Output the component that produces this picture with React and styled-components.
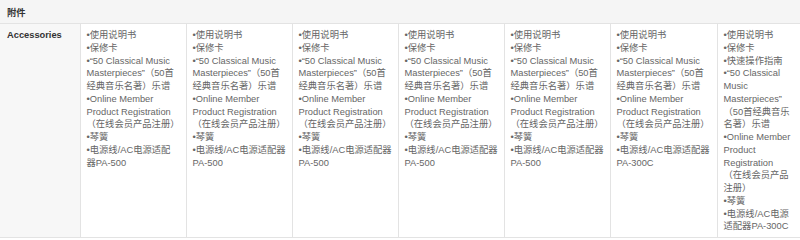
import React from 'react';
import styled, { createGlobalStyle } from 'styled-components';

const GlobalStyle = createGlobalStyle`
    body {
        margin: 0;
        background: #ffffff;
        font-family: "Liberation Sans", Arial, "Noto Sans CJK SC", sans-serif;
    }
`;

const Table = styled.table`
    width: 800px;
    border-collapse: collapse;
    table-layout: fixed;
    font-size: 9.3px;
    color: #666666;
`;

const HeadCell = styled.th`
    height: 23px;
    padding: 0 7px;
    background: #f5f5f5;
    border-bottom: 1px solid #e3e3e3;
    text-align: left;
    font-weight: bold;
    color: #333333;
`;

const LabelCell = styled.td`
    vertical-align: top;
    padding: 5px 7px 4px;
    background: #f7f7f7;
    border-right: 1px solid #e3e3e3;
    border-bottom: 1px solid #e3e3e3;
    font-weight: bold;
    color: #333333;
    line-height: 12.75px;
`;

const ItemCell = styled.td`
    vertical-align: top;
    padding: 5px ${(p) => p.$padRight}px 4px 6px;
    background: #ffffff;
    border-right: 1px solid ${(p) => (p.$last ? 'transparent' : '#e3e3e3')};
    border-bottom: 1px solid #e3e3e3;
    line-height: 12.75px;
`;

const Item = styled.div``;

// \u200B lets the line break between the closing quote and the bracket
const base = [
    '使用说明书',
    '保修卡',
    '“50 Classical Music Masterpieces”\u200B（50首经典音乐名著）乐谱',
    'Online Member Product Registration （在线会员产品注册）',
    '琴簧',
];

const models = [
    { items: [...base, '电源线/AC电源适配器PA-500'], width: 106, padRight: 10 },
    { items: [...base, '电源线/AC电源适配器PA-500'], width: 106, padRight: 5 },
    { items: [...base, '电源线/AC电源适配器PA-500'], width: 106, padRight: 5 },
    { items: [...base, '电源线/AC电源适配器PA-500'], width: 106, padRight: 5 },
    { items: [...base, '电源线/AC电源适配器PA-500'], width: 106, padRight: 5 },
    { items: [...base, '电源线/AC电源适配器PA-300C'], width: 107, padRight: 5 },
    {
        items: [
            '使用说明书',
            '保修卡',
            '快速操作指南',
            '“50 Classical Music Masterpieces”\u200B（50首经典音乐名著）乐谱',
            'Online Member Product Registration （在线会员产品注册）',
            '琴簧',
            '电源线/AC电源适配器PA-300C',
        ],
        width: 83,
        padRight: 6,
    },
];

const App = () => {
    return (
        <React.Fragment>
            <GlobalStyle />
            <Table>
                <colgroup>
                    <col style={{ width: 80 }} />
                    {models.map((m, i) => (
                        <col key={i} style={{ width: m.width }} />
                    ))}
                </colgroup>
                <thead>
                    <tr>
                        <HeadCell colSpan={8}>附件</HeadCell>
                    </tr>
                </thead>
                <tbody>
                    <tr>
                        <LabelCell>Accessories</LabelCell>
                        {models.map((m, i) => (
                            <ItemCell
                                key={i}
                                $padRight={m.padRight}
                                $last={i === models.length - 1}
                            >
                                {m.items.map((text, j) => (
                                    <Item key={j}>•{text}</Item>
                                ))}
                            </ItemCell>
                        ))}
                    </tr>
                </tbody>
            </Table>
        </React.Fragment>
    );
};

export default App;
